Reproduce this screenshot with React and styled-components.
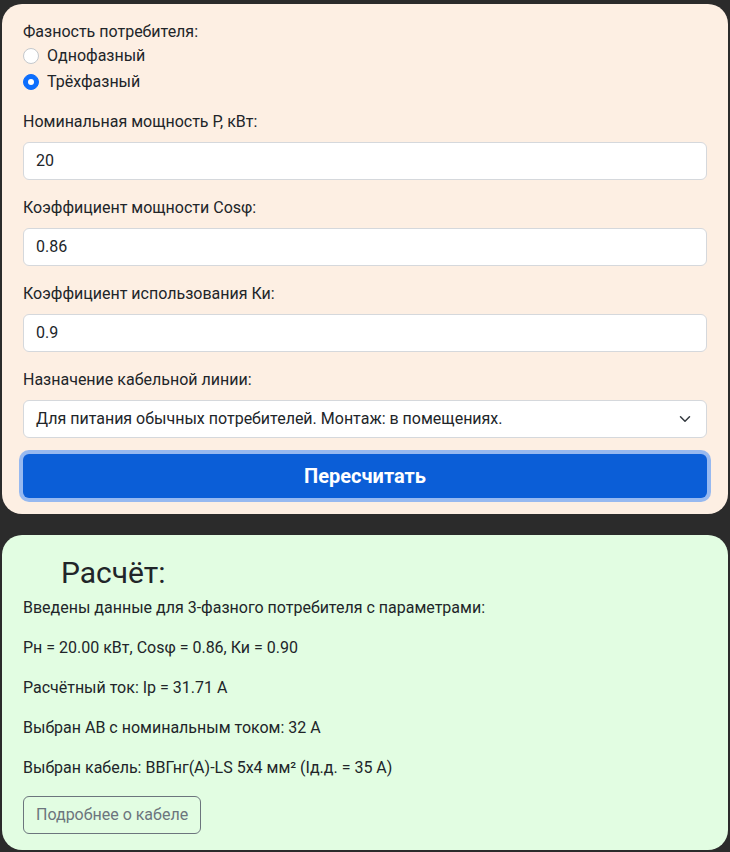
import styled, { createGlobalStyle } from 'styled-components'

const GlobalStyle = createGlobalStyle`
	body {
		margin: 0;
		background: #2b2b2b;
		font-family: Roboto, "Noto Sans", sans-serif;
		font-size: 16px;
		line-height: 1.5;
		color: #212529;
	}
	* { box-sizing: border-box; }
`

const Page = styled.div`
		display: flex;
		flex-direction: column;
		gap: 21px;
		padding: 4px 2px 3px;
	`,
	Card = styled.div`
		background: ${p => p.bg};
		border-radius: 20px;
		padding: 16px 21px;
	`,
	Group = styled.div`
		margin-bottom: 16px;
	`,
	Label = styled.div`
		margin-bottom: ${p => p.tight ? 0 : 8}px;
	`,
	Check = styled.label`
		display: flex;
		align-items: center;
		gap: 8px;
		min-height: 24px;
		margin-bottom: 2px;
	`,
	Radio = styled.span`
		width: 16px;
		height: 16px;
		border-radius: 50%;
		flex-shrink: 0;
		background: ${p => p.checked ? '#0d6efd' : '#fff'};
		border: 1px solid ${p => p.checked ? '#0d6efd' : '#c4c8cc'};
		display: flex;
		align-items: center;
		justify-content: center;
		&::after {
			content: '';
			display: ${p => p.checked ? 'block' : 'none'};
			width: 6px;
			height: 6px;
			border-radius: 50%;
			background: #fff;
		}
	`,
	Input = styled.div`
		height: 38px;
		background: #fff;
		border: 1px solid #d5d8dc;
		border-radius: 6px;
		padding: 6px 12px;
		display: flex;
		align-items: center;
		justify-content: space-between;
		svg {
			width: 12px;
			height: 12px;
			margin-right: 3px;
		}
	`,
	PrimaryButton = styled.button`
		display: block;
		width: 100%;
		height: 44px;
		border: none;
		border-radius: 6px;
		background: #0b5ed7;
		color: #fff;
		font-family: inherit;
		font-size: 20px;
		font-weight: 700;
		box-shadow: 0 0 0 4px rgba(49, 132, 253, .5);
	`,
	Title = styled.h1`
		margin: 4px 0 5px 38px;
		font-size: 30px;
		font-weight: 400;
		line-height: 36px;
	`,
	Text = styled.p`
		margin: 0 0 16px;
	`,
	OutlineButton = styled.button`
		height: 38px;
		padding: 6px 12px;
		border: 1px solid #6c757d;
		border-radius: 6px;
		background: transparent;
		color: #6c757d;
		font-family: inherit;
		font-size: 16px;
		line-height: 1.5;
	`

const Chevron = () =>
	<svg viewBox='0 0 16 16' fill='none' stroke='#343a40' strokeWidth='2' strokeLinecap='round' strokeLinejoin='round'>
		<path d='m2 5 6 6 6-6' />
	</svg>

const fields = [
	{ label: 'Номинальная мощность P, кВт:', value: '20' },
	{ label: 'Коэффициент мощности Cosφ:', value: '0.86' },
	{ label: 'Коэффициент использования Ки:', value: '0.9' },
]

const results = [
	'Введены данные для 3-фазного потребителя с параметрами:',
	'Pн = 20.00 кВт, Cosφ = 0.86, Ки = 0.90',
	'Расчётный ток: Iр = 31.71 А',
	'Выбран АВ с номинальным током: 32 А',
	'Выбран кабель: ВВГнг(А)-LS 5x4 мм² (Iд.д. = 35 А)',
]

const App = () =>
	<>
		<GlobalStyle />
		<Page>
			<Card bg='#fdefe3'>
				<Group>
					<Label tight>Фазность потребителя:</Label>
					<Check><Radio /> Однофазный</Check>
					<Check><Radio checked /> Трёхфазный</Check>
				</Group>
				{fields.map(f =>
					<Group key={f.label}>
						<Label>{f.label}</Label>
						<Input>{f.value}</Input>
					</Group>
				)}
				<Group>
					<Label>Назначение кабельной линии:</Label>
					<Input>
						Для питания обычных потребителей. Монтаж: в помещениях.
						<Chevron />
					</Input>
				</Group>
				<PrimaryButton>Пересчитать</PrimaryButton>
			</Card>
			<Card bg='#e2fde2'>
				<Title>Расчёт:</Title>
				{results.map(r => <Text key={r}>{r}</Text>)}
				<OutlineButton>Подробнее о кабеле</OutlineButton>
			</Card>
		</Page>
	</>

export default App
